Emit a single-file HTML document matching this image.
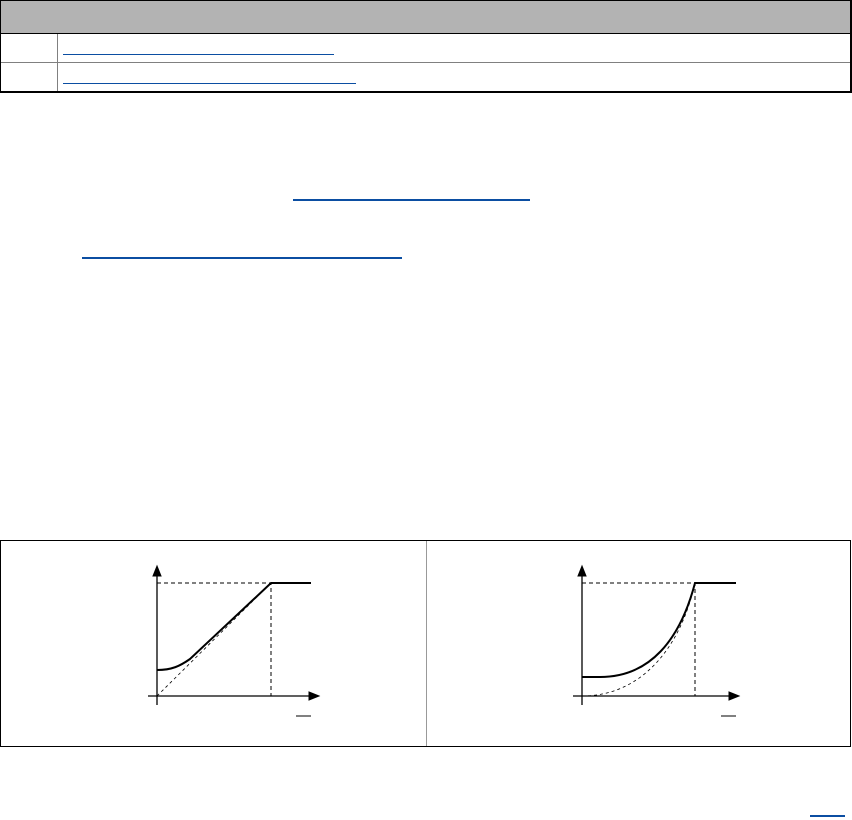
<!DOCTYPE html>
<html><head><style>
body{margin:0;width:852px;height:820px;background:#fff;position:relative;font-family:"Liberation Sans",sans-serif}
.a{position:absolute}
</style></head><body>
<div class="a" style="left:0;top:0;width:849px;height:90px;border:1px solid #000;border-width:1px 2px 2px 1px"></div>
<div class="a" style="left:1px;top:1px;width:849px;height:32px;background:#b3b3b3;border-bottom:1px solid #000"></div>
<div class="a" style="left:1px;top:62px;width:849px;height:1px;background:#808080"></div>
<div class="a" style="left:57px;top:34px;width:1px;height:57px;background:#808080"></div>
<div class="a" style="left:63px;top:54px;width:271px;height:1px;background:#0b4ea2"></div>
<div class="a" style="left:63px;top:83px;width:293px;height:1px;background:#0b4ea2"></div>
<div class="a" style="left:293px;top:199px;width:237px;height:2px;background:#0b4ea2"></div>
<div class="a" style="left:82px;top:257px;width:320px;height:2px;background:#0b4ea2"></div>
<div class="a" style="left:810px;top:815px;width:35px;height:2px;background:#0b4ea2"></div>
<svg class="a" style="left:0;top:0" width="852" height="820">
<rect x="0.5" y="540.5" width="850" height="206" fill="none" stroke="#000"/>
<line x1="426.5" y1="541" x2="426.5" y2="746" stroke="#999"/>
<g stroke="#000" fill="none">
<line x1="157" y1="575" x2="157" y2="705" stroke-width="1.3"/>
<polygon points="157,566 153,576 161,576" fill="#000"/>
<line x1="148" y1="696" x2="310" y2="696" stroke-width="1.3"/>
<polygon points="319,696 309,692 309,700" fill="#000"/>
<path d="M157 583H271V696" stroke-dasharray="4,3"/>
<path d="M157 696L271 583" stroke-dasharray="3,3" stroke-width="0.8"/>
<path d="M157 670C172 670 180 666 190 659L271 583H311" stroke-width="2"/>
<line x1="296" y1="716" x2="311" y2="716"/>
<line x1="582" y1="575" x2="582" y2="705" stroke-width="1.3"/>
<polygon points="582,566 578,576 586,576" fill="#000"/>
<line x1="573" y1="696" x2="730" y2="696" stroke-width="1.3"/>
<polygon points="739,696 729,692 729,700" fill="#000"/>
<path d="M582 583H695V696" stroke-dasharray="4,3"/>
<path d="M582 696C640 696 680 650 695 583" stroke-dasharray="3,3" stroke-width="0.8"/>
<path d="M582 677H600C650 677 680 640 695 583H736" stroke-width="2"/>
<line x1="721" y1="716" x2="736" y2="716"/>
</g>
</svg>
</body></html>
